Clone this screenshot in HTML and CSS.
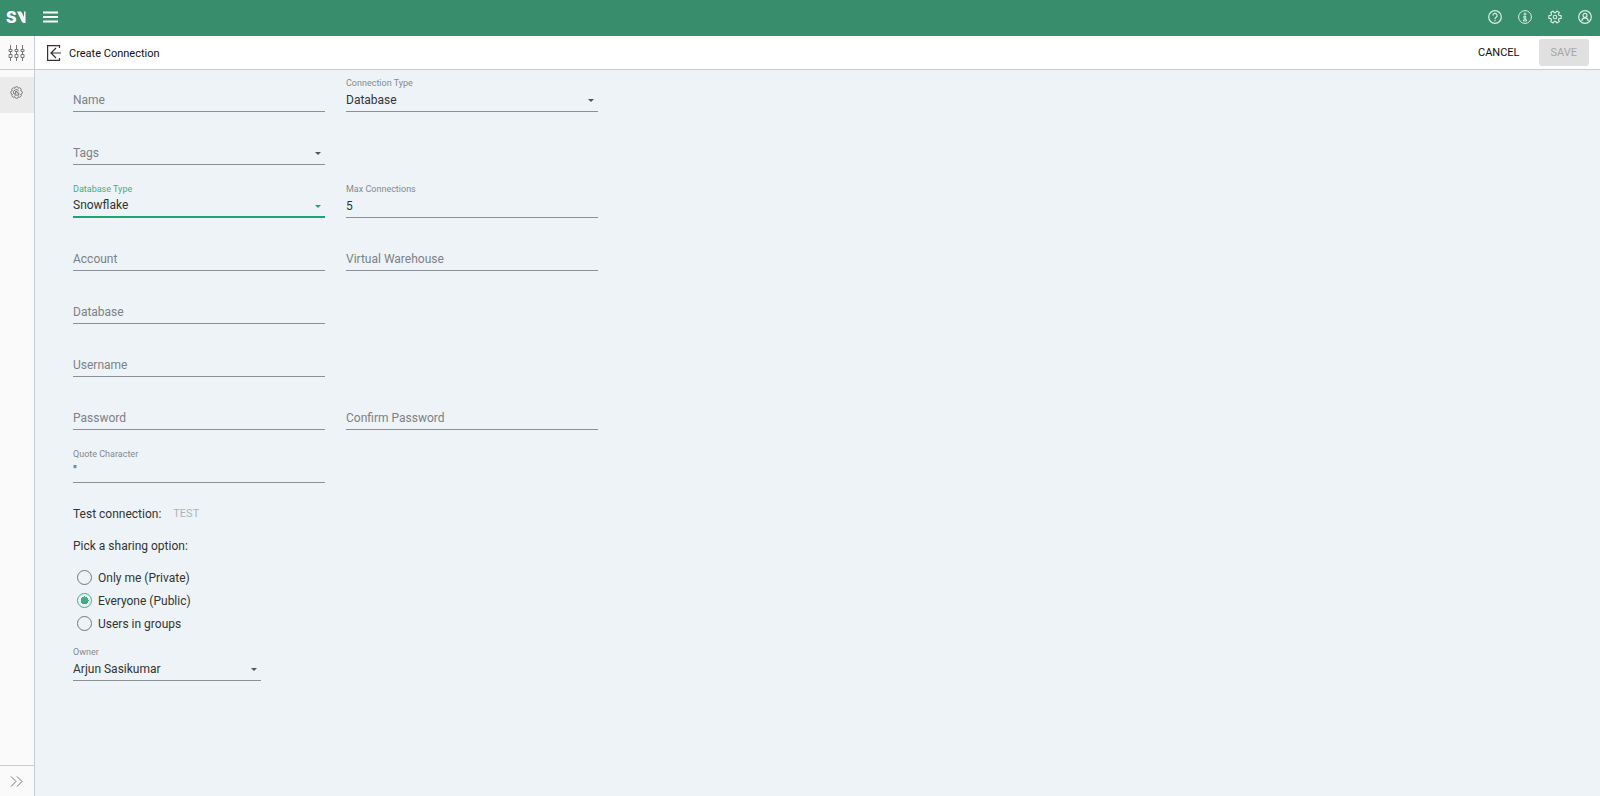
FILE: index.html
```html
<!DOCTYPE html>
<html lang="en">
<head>
  <meta charset="UTF-8">
  <title>Create Connection</title>
  <link rel="stylesheet" href="styles.css">
</head>
<body>
  <header class="topbar">
    <a class="logo" href="#" aria-label="Home">
      <span>S</span>
      <svg width="9" height="12" viewBox="0 0 9 12" fill="#fff">
        <path d="M0 .5h2.500c1.500 0 2.200.6 2.700 1.800L7 6.500V.5h1.500v11.500H6.500L5 11z"/>
      </svg>
    </a>
    <button class="icon-btn menu-btn" aria-label="Menu">
      <svg width="15" height="12" viewBox="0 0 15 12" fill="#fff">
        <path d="M0 0.500h15v2H0zM0 5h15v2H0zM0 9.500h15v2H0z"/>
      </svg>
    </button>
    <nav class="top-actions">
      <button class="icon-btn" aria-label="Help">
        <svg width="14" height="14" viewBox="0 0 14 14" fill="none" stroke="#d9eee5" stroke-width="1.2">
          <circle cx="7" cy="7" r="6.3"/>
          <path d="M4.900 5.600a2.100 2.100 0 1 1 3.200 1.700c-.8.500-1.100.8-1.100 1.600"/>
          <path d="M7 9.800v1.400"/>
        </svg>
      </button>
      <button class="icon-btn" aria-label="Information">
        <svg width="14" height="14" viewBox="0 0 14 14" fill="none" stroke="#d9eee5" stroke-width="1">
          <circle cx="7" cy="7" r="6.4"/>
          <circle cx="7" cy="4" r="1"/>
          <path d="M5.700 6.300h2v3.600h.8v1.100H5.600V9.900h.7V7.300h-.6z"/>
        </svg>
      </button>
      <button class="icon-btn" aria-label="Settings">
        <svg width="14" height="14" viewBox="0 0 14 14" fill="none" stroke="#d9eee5" stroke-width="1.1" stroke-linejoin="round">
          <path d="M13.140 5.580V8.420L11.100 8.580 10.420 9.770 11.300 11.600 8.840 13.020 7.690 11.350H6.310L5.160 13.020 2.700 11.600 3.580 9.770 2.900 8.580.860 8.420V5.580L2.900 5.420 3.580 4.230 2.700 2.400 5.160.980 6.310 2.650H7.690L8.840.980 11.300 2.400 10.420 4.230 11.100 5.420z"/>
          <circle cx="7" cy="7" r="1.800"/>
        </svg>
      </button>
      <button class="icon-btn" aria-label="Account">
        <svg width="14" height="14" viewBox="0 0 14 14" fill="none" stroke="#d9eee5" stroke-width="1.2">
          <circle cx="7" cy="7" r="6.3"/>
          <circle cx="7" cy="5.400" r="2"/>
          <path d="M3.800 11c.2-2.200 1.300-3.200 3.200-3.200s3 1 3.200 3.200"/>
        </svg>
      </button>
    </nav>
  </header>

  <div class="layout">
    <aside class="sidebar">
      <button class="side-item side-top" aria-label="Controls">
        <svg width="17" height="16" viewBox="0 0 17 16" fill="none" stroke="#777" stroke-width="1">
          <path d="M2.500 0v4M2.500 7v2.500M2.500 12.500V16M8.500 0v4M8.500 7v2.500M8.500 12.500V16M14.500 0v4M14.500 7v2.500M14.500 12.500V16"/>
          <path d="M1 4.500h3v2H1zM7 4.500h3v2H7zM13 4.500h3v2h-3zM1 9.500h3v3H1zM7 9.500h3v3H7zM13 9.500h3v3h-3z"/>
        </svg>
      </button>
      <button class="side-item side-active" aria-label="Connections">
        <svg width="13" height="13" viewBox="-.5 -.5 13 13" fill="none" stroke="#6c6c6c" stroke-width=".9">
          <path d="M10.250 4.240a1.770 1.770 0 0 1 0 3.520 1.770 1.770 0 0 1-2.490 2.490 1.770 1.770 0 0 1-3.520 0 1.770 1.770 0 0 1-2.490-2.490 1.770 1.770 0 0 1 0-3.520 1.770 1.770 0 0 1 2.490-2.490 1.770 1.770 0 0 1 3.520 0 1.770 1.770 0 0 1 2.490 2.490z"/>
          <path d="M3.300 7.500a2.900 2.900 0 0 1 5-3M4.300 8.600h4V6.500H6.500V5H5v2H4.300z"/>
        </svg>
      </button>
      <button class="side-item side-bottom" aria-label="Expand">
        <svg width="13" height="11" viewBox="0 0 13 11" fill="none" stroke="#777" stroke-width="1">
          <path d="M1 .5l5 5-5 5M7 .5l5 5-5 5"/>
        </svg>
      </button>
    </aside>

    <main class="content">
      <div class="page-head">
        <button class="icon-btn" aria-label="Back">
          <svg width="14" height="16" viewBox="0 0 14 16" fill="none" stroke="#333" stroke-width="1.2">
            <path d="M12.500 3V.6H.6v14.800h11.900V13M14 8H4M9 3L4 8l5 5"/>
          </svg>
        </button>
        <h1>Create Connection</h1>
        <button class="btn btn-cancel">CANCEL</button>
        <button class="btn btn-save" disabled>SAVE</button>
      </div>

      <form class="form">
        <div class="fields">
          <div class="field">
            <input type="text" placeholder="Name" aria-label="Name">
          </div>
          <div class="field select">
            <label for="connType">Connection Type</label>
            <select id="connType"><option>Database</option></select>
          </div>
          <div class="field select first-col">
            <select class="empty" aria-label="Tags"><option>Tags</option></select>
          </div>
          <div class="field select focused first-col">
            <label for="dbType">Database Type</label>
            <select id="dbType"><option>Snowflake</option></select>
          </div>
          <div class="field">
            <label for="maxConn">Max Connections</label>
            <input type="text" id="maxConn" value="5">
          </div>
          <div class="field">
            <input type="text" placeholder="Account" aria-label="Account">
          </div>
          <div class="field">
            <input type="text" placeholder="Virtual Warehouse" aria-label="Virtual Warehouse">
          </div>
          <div class="field first-col">
            <input type="text" placeholder="Database" aria-label="Database">
          </div>
          <div class="field first-col">
            <input type="text" placeholder="Username" aria-label="Username">
          </div>
          <div class="field first-col">
            <input type="password" placeholder="Password" aria-label="Password">
          </div>
          <div class="field">
            <input type="password" placeholder="Confirm Password" aria-label="Confirm Password">
          </div>
          <div class="field first-col">
            <label for="quoteChar">Quote Character</label>
            <input type="text" id="quoteChar" value="&quot;">
          </div>
        </div>

        <div class="test-row">
          <span>Test connection:</span>
          <button type="button" class="btn-test" disabled>TEST</button>
        </div>

        <fieldset class="sharing">
          <legend>Pick a sharing option:</legend>
          <label><input type="radio" name="sharing">Only me (Private)</label>
          <label><input type="radio" name="sharing" checked>Everyone (Public)</label>
          <label><input type="radio" name="sharing">Users in groups</label>
        </fieldset>

        <div class="field select owner">
          <label for="owner">Owner</label>
          <select id="owner"><option>Arjun Sasikumar</option></select>
        </div>
      </form>
    </main>
  </div>
</body>
</html>
```
FILE: styles.css
```css
* {
  box-sizing: border-box;
}

body {
  margin: 0;
  min-height: 100vh;
  display: flex;
  flex-direction: column;
  font-family: Roboto, Arial, sans-serif;
  font-size: 12px;
  color: #333;
  background-color: #edf3f7;
}

button,
input,
select {
  font-family: inherit;
  font-size: inherit;
  color: inherit;
}

svg {
  display: block;
}

/* top bar */
.topbar {
  height: 36px;
  display: flex;
  align-items: center;
  padding: 0 8px 2px 6px;
  background-color: #388e6c;
}

.logo {
  display: flex;
  align-items: center;
  font-family: Inter, sans-serif;
  font-size: 16px;
  font-weight: 800;
  line-height: 20px;
  color: #fff;
  text-decoration: none;
}

.icon-btn {
  padding: 0;
  border: none;
  background: none;
  cursor: pointer;
}

.menu-btn {
  margin-left: 17px;
}

.top-actions {
  display: flex;
  gap: 16px;
  margin-left: auto;
}

/* sidebar */
.layout {
  flex: 1;
  display: flex;
}

.sidebar {
  width: 35px;
  display: flex;
  flex-direction: column;
  background-color: #fafafa;
  border-right: 1px solid #c3cdd3;
}

.side-item {
  display: flex;
  align-items: center;
  justify-content: center;
  padding: 0 2px 0 0;
  border: none;
  background: none;
  cursor: pointer;
}

.side-top {
  height: 34px;
  border-bottom: 1px solid #c3cdd3;
}

.side-active {
  height: 36px;
  margin-top: 7px;
  padding-bottom: 5px;
  background-color: #ebebeb;
}

.side-bottom {
  height: 31px;
  margin-top: auto;
  border-top: 1px solid #c3cdd3;
}

/* page header */
.content {
  flex: 1;
}

.page-head {
  height: 34px;
  display: flex;
  align-items: center;
  padding: 0 11px 0 12px;
  background-color: #fff;
  border-bottom: 1px solid #c3cdd3;
}

.page-head h1 {
  flex: 1;
  margin: 0 0 0 8px;
  padding-top: 2px;
  font-size: 11px;
  font-weight: 400;
  color: #111;
}

.btn {
  height: 27px;
  padding: 0 12px;
  border: none;
  border-radius: 3px;
  background: none;
  font-size: 11px;
  cursor: pointer;
}

.btn-cancel {
  margin-right: 7px;
  color: #111;
}

.btn-save {
  background-color: #e0e0e0;
  color: #a6a6a6;
}

/* form */
.form {
  padding: 0 38px 20px;
}

.fields {
  display: grid;
  grid-template-columns: repeat(2, 252px);
  column-gap: 21px;
  row-gap: 11px;
}

.first-col {
  grid-column: 1;
}

.field {
  position: relative;
  min-height: 42px;
  display: flex;
  flex-direction: column;
  justify-content: flex-end;
}

.field label {
  font-size: 9px;
  line-height: 10px;
  color: #858a8e;
}

.field input,
.field select {
  width: 100%;
  height: 24px;
  padding: 0;
  border: none;
  border-bottom: 1px solid #8b9094;
  border-radius: 0;
  outline: none;
  background: none;
  appearance: none;
}

.field input::placeholder,
.field .empty {
  color: #7d8184;
  opacity: 1;
}

.select::after {
  content: "";
  position: absolute;
  right: 4px;
  bottom: 10px;
  border: 3px solid transparent;
  border-top-color: #555;
  border-bottom: none;
  pointer-events: none;
}

.focused label {
  color: #3fb083;
}

.focused select {
  border-bottom: 2px solid #1fa574;
}

.focused::after {
  border-top-color: #1fa574;
}

.test-row {
  display: flex;
  align-items: center;
  gap: 12px;
  height: 33px;
  margin-top: 14px;
}

.btn-test {
  padding: 0;
  border: none;
  background: none;
  font-size: 11px;
  color: #b0b4b7;
}

.sharing {
  margin: 0 0 4px;
  padding: 0;
  border: none;
}

.sharing legend {
  margin-bottom: 3px;
  padding: 0;
  line-height: 33px;
}

.sharing label {
  display: flex;
  align-items: center;
  gap: 6px;
  height: 23px;
  padding-left: 4px;
}

.sharing input {
  width: 15px;
  height: 15px;
  margin: 0;
  border: 1px solid #777;
  border-radius: 50%;
  appearance: none;
}

.sharing input:checked {
  border-color: #3fb083;
  background: radial-gradient(circle, #3fb083 4px, transparent 4px);
}

.owner {
  width: 188px;
}
```
